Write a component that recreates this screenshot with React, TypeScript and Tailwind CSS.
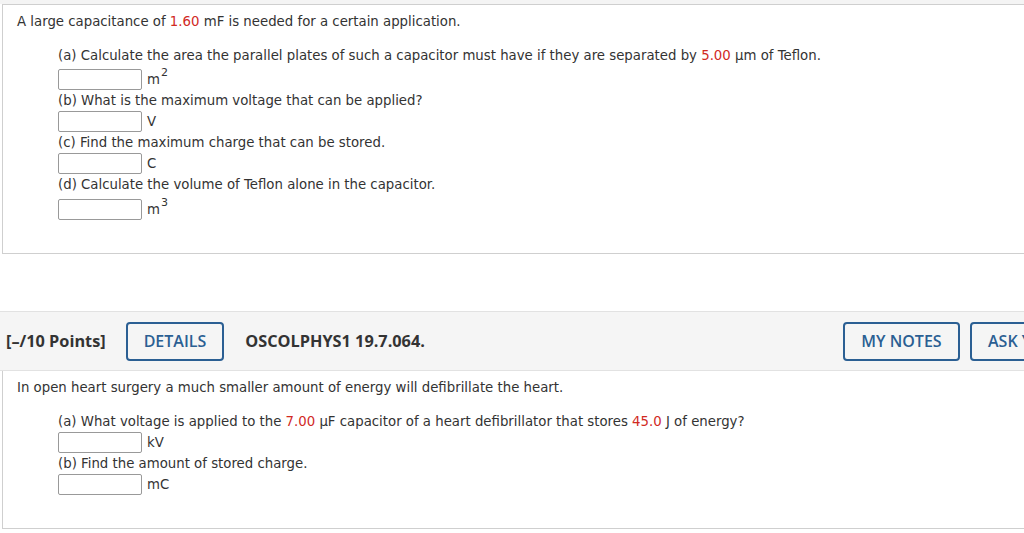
const body = "font-['DejaVu_Sans',Verdana,sans-serif] text-[13.3px] leading-[21px] text-[#333]";
const head = "font-['Open_Sans',sans-serif]";

function Red({ children }: { children: React.ReactNode }) {
  return <span className="text-[#d12a1f]">{children}</span>;
}

function Answer({ unit, sup, raised = false }: { unit: string; sup?: string; raised?: boolean }) {
  return (
    <div className={`flex items-center gap-[5px] ${raised ? "pt-[3px]" : ""}`}>
      <input
        type="text"
        className="h-[21px] w-[84px] rounded-[2px] border border-[#999] bg-white px-1"
      />
      <span className="leading-[21px]">
        {unit}
        {sup ? <sup className="top-[-0.75em] ml-[1px] text-[11px]">{sup}</sup> : null}
      </span>
    </div>
  );
}

function OutlineButton({ label, width }: { label: string; width?: string }) {
  return (
    <button
      type="button"
      className={`${head} h-[39px] shrink-0 rounded-[4px] border-2 border-[#2b5f93] px-4 text-[16px] font-semibold text-[#2b5f93] ${width ?? ""}`}
    >
      {label}
    </button>
  );
}

export default function App() {
  return (
    <div className="h-[533px] w-[1024px] overflow-hidden bg-white">
      <div className={`w-[1200px] ${body}`}>
        <div className="h-[4px] bg-[#f4f4f4]" />

        {/* previous question */}
        <div className="ml-[2px] border-y border-l border-[#cfcfcf] px-[14px] pb-[33px] pt-[6px]">
          <p>
            A large capacitance of <Red>1.60</Red> mF is needed for a certain application.
          </p>
          <div className="mt-[13px] pl-[41px]">
            <p>
              (a) Calculate the area the parallel plates of such a capacitor must have if they are
              separated by <Red>5.00</Red> µm of Teflon.
            </p>
            <Answer unit="m" sup="2" raised />
            <p>(b) What is the maximum voltage that can be applied?</p>
            <Answer unit="V" />
            <p>(c) Find the maximum charge that can be stored.</p>
            <Answer unit="C" />
            <p>(d) Calculate the volume of Teflon alone in the capacitor.</p>
            <div className="pt-[1px]">
              <Answer unit="m" sup="3" raised />
            </div>
          </div>
        </div>

        {/* question header */}
        <div className="mt-[57px] flex h-[60px] items-center border-y border-[#e2e2e2] bg-[#f5f5f5] pl-[6px]">
          <div className="flex w-[837px] shrink-0 items-center">
            <span className={`${head} text-[16.3px] font-bold text-[#333]`}>[–/10 Points]</span>
            <div className="ml-[20px]">
              <OutlineButton label="DETAILS" />
            </div>
            <span className={`${head} ml-[21px] text-[16.3px] font-bold text-[#333]`}>
              OSCOLPHYS1 19.7.064.
            </span>
          </div>
          <div className="flex gap-[10px]">
            <OutlineButton label="MY NOTES" width="w-[117px]" />
            <OutlineButton label="ASK YOUR TEACHER" />
          </div>
        </div>

        {/* current question */}
        <div className="ml-[2px] border-b border-l border-[#cfcfcf] px-[14px] pb-[33px] pt-[6px]">
          <p>In open heart surgery a much smaller amount of energy will defibrillate the heart.</p>
          <div className="mt-[13px] pl-[41px]">
            <p>
              (a) What voltage is applied to the <Red>7.00</Red> µF capacitor of a heart
              defibrillator that stores <Red>45.0</Red> J of energy?
            </p>
            <Answer unit="kV" />
            <p>(b) Find the amount of stored charge.</p>
            <Answer unit="mC" />
          </div>
        </div>
      </div>
    </div>
  );
}
